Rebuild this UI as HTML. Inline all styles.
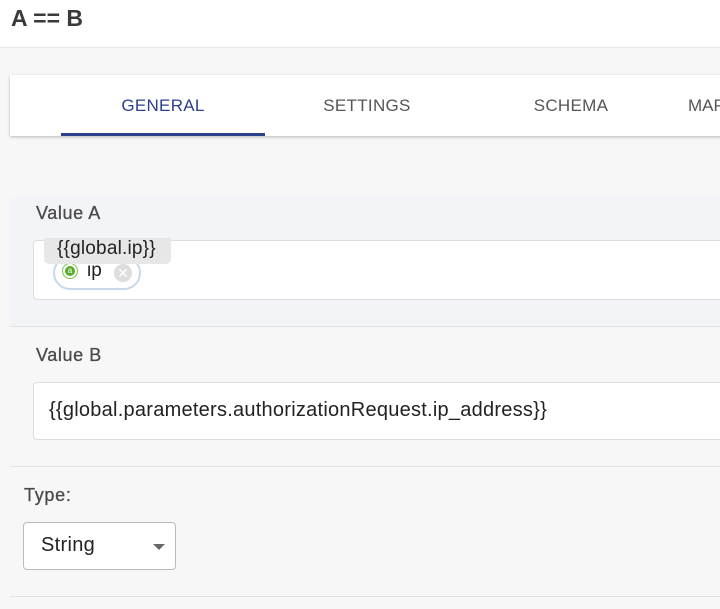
<!DOCTYPE html>
<html><head><style>
*{margin:0;padding:0;box-sizing:border-box}
body{width:720px;height:609px;overflow:hidden;background:#f7f7f7;font-family:"Liberation Sans",sans-serif;position:relative}
.a{position:absolute}
</style></head><body>
<div class="a" style="left:0;top:0;width:720px;height:48px;background:#fff;border-bottom:1px solid #e6e6e6"></div>
<div class="a" style="left:11px;top:5px;font-size:23px;font-weight:bold;color:#3a3a3a">A == B</div>
<div class="a" style="left:10px;top:75px;width:720px;height:61px;background:#fff;box-shadow:0 1px 3px rgba(0,0,0,.25)"></div>
<div class="a" style="left:61px;top:96px;width:204px;text-align:center;font-size:17px;color:#2b3f8c;letter-spacing:.3px">GENERAL</div>
<div class="a" style="left:61px;top:133px;width:204px;height:3px;background:#2b3f8c"></div>
<div class="a" style="left:265px;top:96px;width:204px;text-align:center;font-size:17px;color:#555;letter-spacing:.3px">SETTINGS</div>
<div class="a" style="left:469px;top:96px;width:204px;text-align:center;font-size:17px;color:#555;letter-spacing:.3px">SCHEMA</div>
<div class="a" style="left:688px;top:96px;font-size:17px;color:#555">MAP</div>
<div class="a" style="left:10px;top:197px;width:710px;height:130px;background:#f3f4f8;border-bottom:1px solid #e3e3e3"></div>
<div class="a" style="left:36px;top:203px;font-size:18px;color:#4a4a4a;letter-spacing:.6px;-webkit-text-stroke:.3px #4a4a4a">Value A</div>
<div class="a" style="left:33px;top:240px;width:700px;height:60px;background:#fff;border:1px solid #ddd;border-radius:4px"></div>
<div class="a" style="left:53px;top:256px;width:88px;height:34px;border:2px solid #c8d8ea;border-radius:17px;background:#fff"></div>
<div class="a" style="left:62px;top:263px;width:16px;height:16px;border:1.5px solid #7cc04a;border-radius:50%"></div>
<div class="a" style="left:65px;top:266px;width:10px;height:10px;background:#5aaa2c;border-radius:50%;color:#fff;font-size:8px;text-align:center;line-height:10px">a</div>
<div class="a" style="left:87px;top:260px;font-size:19px;color:#222">ip</div>
<div class="a" style="left:114px;top:264px;width:18px;height:18px;border-radius:50%;background:#ddd;color:#fff;font-size:14px;text-align:center;line-height:18px">✕</div>
<div class="a" style="left:44px;top:238px;width:127px;height:26px;background:#e7e7e7;border-radius:0 0 5px 5px;font-size:19px;color:#222;padding:0 0 0 13px;letter-spacing:.2px">{{global.ip}}</div>
<div class="a" style="left:36px;top:345px;font-size:18px;color:#4a4a4a;letter-spacing:.6px;-webkit-text-stroke:.3px #4a4a4a">Value B</div>
<div class="a" style="left:33px;top:382px;width:700px;height:58px;background:#fff;border:1px solid #ddd;border-radius:4px"></div>
<div class="a" style="left:49px;top:399px;font-size:20px;color:#222;letter-spacing:.25px">{{global.parameters.authorizationRequest.ip_address}}</div>
<div class="a" style="left:10px;top:466px;width:710px;height:1px;background:#e3e3e3"></div>
<div class="a" style="left:24px;top:485px;font-size:18px;color:#4a4a4a;letter-spacing:.7px;-webkit-text-stroke:.3px #4a4a4a">Type:</div>
<div class="a" style="left:23px;top:522px;width:153px;height:48px;background:#fff;border:1px solid #bbb;border-radius:4px"></div>
<div class="a" style="left:41px;top:534px;font-size:20px;color:#222;letter-spacing:.3px">String</div>
<div class="a" style="left:153px;top:544px;width:0;height:0;border-left:6px solid transparent;border-right:6px solid transparent;border-top:6px solid #666"></div>
<div class="a" style="left:10px;top:596px;width:710px;height:1px;background:#e3e3e3"></div>
</body></html>
